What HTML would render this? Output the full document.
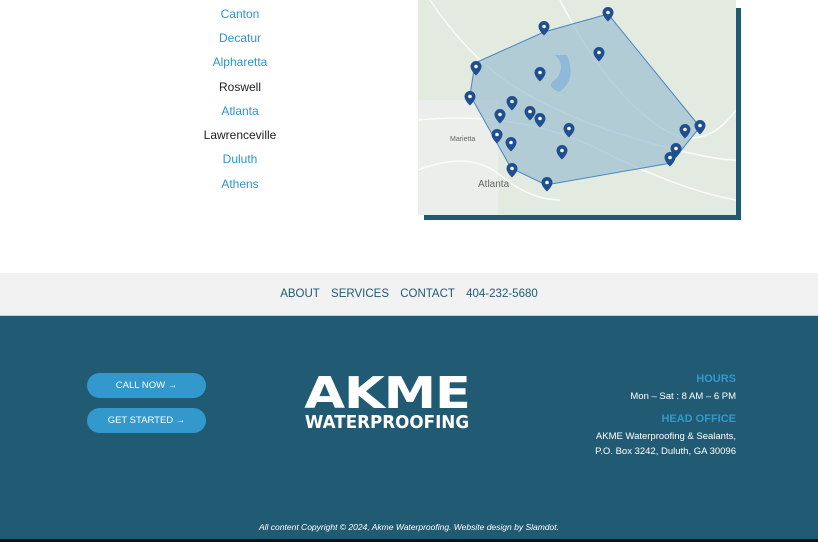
<!DOCTYPE html>
<html><head><meta charset="utf-8"><style>
*{margin:0;padding:0;box-sizing:border-box}
body{width:818px;height:542px;overflow:hidden;background:#fff;font-family:"Liberation Sans",sans-serif;position:relative}
.city{position:absolute;left:140px;width:200px;text-align:center;font-size:12px;color:#2e93cc}
.city.d{color:#222}
.map{position:absolute;left:418px;top:0;width:318px;height:215px;background:#e6eee4;overflow:hidden}
.shadow{position:absolute;left:424px;top:8px;width:317px;height:212px;background:#1f5a72}
.nav{position:absolute;top:273px;left:0;width:818px;height:43px;background:#f2f2f2;border-bottom:1px solid #ccc;text-align:center;font-size:11.5px;color:#1e5a74;line-height:43px}
.nav span{margin:0 4px}
.foot{position:absolute;top:316px;left:0;width:818px;height:223px;background:#205a73}
.btn{position:absolute;left:87px;width:119px;height:25px;border-radius:13px;background:#3399cc;color:#fff;font-size:9.5px;text-align:center;line-height:25px}
.r{position:absolute;right:82px;text-align:right;color:#fff;font-size:9.5px}
.h{color:#3399cc;font-weight:bold;font-size:11px}
</style></head><body>
<div class="city" style="top:7px">Canton</div>
<div class="city" style="top:31px">Decatur</div>
<div class="city" style="top:55px">Alpharetta</div>
<div class="city d" style="top:80px">Roswell</div>
<div class="city" style="top:104px">Atlanta</div>
<div class="city d" style="top:128px">Lawrenceville</div>
<div class="city" style="top:152px">Duluth</div>
<div class="city" style="top:177px">Athens</div>

<div class="shadow"></div>
<div class="map">
<svg width="318" height="215" viewBox="418 0 318 215">
<rect x="418" y="0" width="318" height="215" fill="#e3ebe1"/>
<rect x="418" y="100" width="80" height="115" fill="#ecefee" opacity=".8"/>
<g stroke="#fff" stroke-width="1.5" fill="none" opacity=".8">
<path d="M418 170 Q470 150 500 175 T560 200"/>
<path d="M430 0 Q470 60 520 90 T640 140 T736 160"/>
<path d="M560 0 Q600 80 650 120 T736 110"/>
<path d="M418 120 Q520 110 600 150 T736 200"/>
</g>
<polygon points="608,14 544,32 475,63 470,95 511,168 546,185 671,163 700,127" fill="#9dbfd2" fill-opacity=".7" stroke="#4a86c0" stroke-width="1"/>
<path d="M555 55 q12 12 0 25 q-10 6 4 12 q18 -12 8 -37z" fill="#7aaad8" opacity=".6"/>
<text x="478" y="187" font-size="10" fill="#666" font-family="Liberation Sans">Atlanta</text>
<text x="450" y="141" font-size="7" fill="#666" font-family="Liberation Sans">Marietta</text>
<defs><g id="p"><path d="M0 -13 a5.5 5.5 0 0 1 5.5 5.5 c0 4 -5.5 9 -5.5 9 c0 0 -5.5 -5 -5.5 -9 a5.5 5.5 0 0 1 5.5 -5.5z" fill="#1f4f8f"/><circle cy="-7.5" r="1.8" fill="#fff"/></g></defs>
<use href="#p" x="608" y="20"/><use href="#p" x="544" y="34"/><use href="#p" x="599" y="60"/><use href="#p" x="476" y="74"/><use href="#p" x="540" y="80"/><use href="#p" x="470" y="104"/><use href="#p" x="512" y="109"/><use href="#p" x="500" y="122"/><use href="#p" x="530" y="119"/><use href="#p" x="540" y="126"/><use href="#p" x="569" y="136"/><use href="#p" x="497" y="142"/><use href="#p" x="511" y="150"/><use href="#p" x="562" y="158"/><use href="#p" x="512" y="176"/><use href="#p" x="547" y="190"/><use href="#p" x="685" y="137"/><use href="#p" x="700" y="133"/><use href="#p" x="676" y="156"/><use href="#p" x="670" y="165"/>
</svg>
</div>

<div class="nav"><span>ABOUT</span> <span>SERVICES</span> <span>CONTACT</span> <span>404-232-5680</span></div>
<div class="foot"></div>
<div class="btn" style="top:373px">CALL NOW →</div>
<div class="btn" style="top:408px">GET STARTED →</div>
<div style="position:absolute;left:287px;top:372px;width:200px;text-align:center;color:#fff;font-weight:900;font-size:44px;line-height:44px;letter-spacing:-1px;font-family:'DejaVu Sans',sans-serif;transform:scaleX(1.2)">AKME</div>
<div style="position:absolute;left:287px;top:413px;width:200px;text-align:center;color:#fff;font-weight:bold;font-size:18px;line-height:19px;font-family:'DejaVu Sans',sans-serif;transform:scaleX(.93)">WATERPROOFING</div>
<div class="r h" style="top:373px">HOURS</div>
<div class="r" style="top:391px">Mon – Sat : 8 AM – 6 PM</div>
<div class="r h" style="top:413px">HEAD OFFICE</div>
<div class="r" style="top:430px;line-height:14.5px">AKME Waterproofing &amp; Sealants,<br>P.O. Box 3242, Duluth, GA 30096</div>
<div style="position:absolute;top:522px;left:0;width:818px;text-align:center;color:#fff;font-size:8.5px;font-style:italic">All content Copyright © 2024, Akme Waterproofing. Website design by Slamdot.</div>
<div style="position:absolute;top:539px;left:0;width:818px;height:3px;background:#111"></div>
</body></html>
